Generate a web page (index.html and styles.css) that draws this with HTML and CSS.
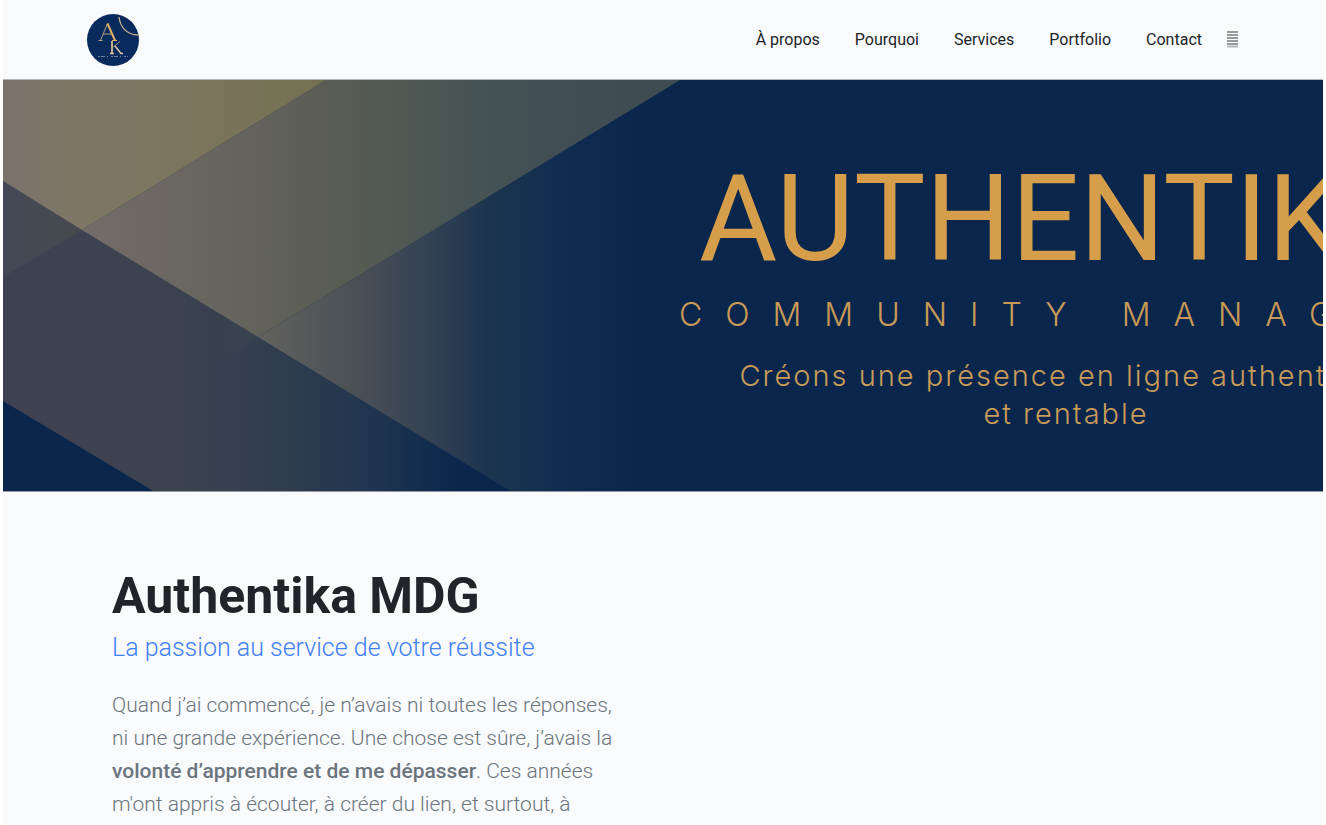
FILE: index.html
```html
<!DOCTYPE html>
<html lang="fr">
<head>
<meta charset="utf-8">
<title>Authentika MDG</title>
<link rel="stylesheet" href="styles.css">
</head>
<body>
<header class="site-header">
  <a class="brand" href="#" aria-label="Authentika">
    <svg width="52" height="52" viewBox="0 0 52 52" fill="none">
      <circle cx="26" cy="26" r="26" fill="#082a5c"/>
      <path d="M32 3c1 9 7 18 19 18" stroke="#c3ad89" stroke-width="1.3"/>
      <path d="M13.500 26.500 20.500 9.500M16.500 20h9M11.500 26.500h4" stroke="#b9a37c" stroke-width="1"/>
      <path d="M20.500 9.500 28 26.500" stroke="#dfb35f" stroke-width="2"/>
      <path d="M25 26.500h5" stroke="#dfb35f" stroke-width="1"/>
      <path d="M25 27v12M23 39.500h4" stroke="#dcc493" stroke-width="1.700"/>
      <path d="M33 27.500 25.500 33.500" stroke="#a99a80" stroke-width="1"/>
      <path d="M28 32 34 39.500h2" stroke="#d8c8aa" stroke-width="1.500"/>
      <path d="M11 42.500h30" stroke="#71809a" stroke-width="1" stroke-dasharray="2 1 4 2 1 3"/>
    </svg>
  </a>
  <nav class="menu">
    <a href="#apropos">À propos</a>
    <a href="#pourquoi">Pourquoi</a>
    <a href="#services">Services</a>
    <a href="#portfolio">Portfolio</a>
    <a href="#contact">Contact</a>
    <button class="menu-toggle" type="button" aria-label="Menu">
      <svg width="11" height="17" viewBox="0 0 11 17">
        <path d="M0 1h11M0 4h11M0 7h11M0 10h11M0 13h11" stroke="#777a7d" stroke-width="1.300"/>
        <path d="M0 15.500h11" stroke="#b4b6b8" stroke-width="2"/>
      </svg>
    </button>
  </nav>
</header>
<main>
  <section class="hero">
    <svg class="hero-art" width="680" height="412" viewBox="0 0 680 412" aria-hidden="true">
      <defs>
        <linearGradient id="gold" gradientUnits="userSpaceOnUse" x1="0" y1="0" x2="323" y2="0">
          <stop offset="0" stop-color="#7b716c"/><stop offset=".18" stop-color="#7e7667"/>
          <stop offset=".5" stop-color="#7d765f"/><stop offset="1" stop-color="#737052"/>
        </linearGradient>
        <linearGradient id="slate" gradientUnits="userSpaceOnUse" x1="79" y1="0" x2="677" y2="0">
          <stop offset="0" stop-color="#746c69"/><stop offset=".22" stop-color="#67655f"/>
          <stop offset=".42" stop-color="#5a5d54"/><stop offset=".6" stop-color="#4a5653"/>
          <stop offset=".75" stop-color="#424f54"/><stop offset="1" stop-color="#3e4b50"/>
        </linearGradient>
        <linearGradient id="fade" gradientUnits="userSpaceOnUse" x1="255" y1="0" x2="640" y2="0">
          <stop offset="0" stop-color="#62625e"/><stop offset=".24" stop-color="#4c5156"/>
          <stop offset=".44" stop-color="#344253"/><stop offset=".6" stop-color="#1c344f"/>
          <stop offset=".8" stop-color="#102c50"/><stop offset="1" stop-color="#0a264d"/>
        </linearGradient>
        <linearGradient id="band" gradientUnits="userSpaceOnUse" x1="0" y1="0" x2="460" y2="0">
          <stop offset="0" stop-color="#3e4151"/><stop offset=".3" stop-color="#3d4250"/>
          <stop offset=".5" stop-color="#37404f"/><stop offset=".64" stop-color="#2d3c4e"/>
          <stop offset=".8" stop-color="#20354f"/><stop offset="1" stop-color="#0a264d"/>
        </linearGradient>
        <linearGradient id="corner" gradientUnits="userSpaceOnUse" x1="0" y1="0" x2="79" y2="0">
          <stop offset="0" stop-color="#444856"/><stop offset="1" stop-color="#464a4e"/>
        </linearGradient>
        <linearGradient id="trace" gradientUnits="userSpaceOnUse" x1="215" y1="0" x2="262" y2="0">
          <stop offset="0" stop-color="#4a4f50" stop-opacity="0"/><stop offset="1" stop-color="#4a4f50" stop-opacity=".3"/>
        </linearGradient>
      </defs>
      <path d="M0 101 509 412H152L0 321z" fill="url(#band)"/>
      <path d="M215 232 255 257 215 281z" fill="url(#trace)"/>
      <path d="M0 101 79 150 0 197z" fill="url(#corner)"/>
      <path d="M255 257 677 0V412H509z" fill="url(#fade)"/>
      <path d="M79 150 323 0H677L255 257z" fill="url(#slate)"/>
      <path d="M0 0H323L79 150 0 101z" fill="url(#gold)"/>
    </svg>
    <div class="hero-copy">
      <p class="hero-name">AUTHENTIKA</p>
      <p class="hero-role">COMMUNITY MANAGER</p>
      <p class="hero-line">Créons une présence en ligne authentique<br>et rentable</p>
    </div>
  </section>
  <section class="about" id="apropos">
    <h1>Authentika MDG</h1>
    <p class="tagline">La passion au service de votre réussite</p>
    <p class="story">Quand j’ai commencé, je n’avais ni toutes les réponses, ni une grande expérience. Une chose est sûre, j’avais la <strong>volonté d’apprendre et de me dépasser</strong>. Ces années m'ont appris à écouter, à créer du lien, et surtout, à</p>
  </section>
</main>
</body>
</html>
```
FILE: styles.css
```css
* { box-sizing: border-box; }
html { background: #fff; }
body {
  min-height: 100vh;
  margin: 0 3px;
  background: #f8fafc;
  color: #212529;
  font-family: Roboto, "Liberation Sans", sans-serif;
  overflow-x: hidden;
}
p, h1 { margin: 0; }
.site-header {
  display: flex;
  align-items: center;
  justify-content: space-between;
  height: 80px;
  padding: 0 85px 0 84px;
  border-bottom: 1px solid #b4b6b4;
}
.brand svg { display: block; }
.menu { display: flex; align-items: center; gap: 35px; }
.menu a {
  color: #212529;
  font-size: 16px;
  line-height: 24px;
  text-decoration: none;
}
.menu-toggle {
  display: flex;
  margin-left: -10px;
  padding: 0;
  border: 0;
  background: none;
}
.hero {
  position: relative;
  overflow: hidden;
  height: 412px;
  background: #0a264d;
  border-bottom: 1px solid #9299a5;
}
.hero-art { position: absolute; left: 0; top: 0; }
.hero-copy {
  position: relative;
  width: 800px;
  margin-left: 657px;
  padding-top: 69px;
  color: #d69e4a;
  text-align: center;
  white-space: nowrap;
}
.hero-name { font-size: 120px; line-height: 140px; }
.hero-role {
  font-family: Inter, Roboto, sans-serif;
  font-size: 32px;
  font-weight: 300;
  line-height: 52px;
  letter-spacing: 23px;
  color: #c99a55;
}
.hero-line {
  padding: 16px 0 0 12px;
  font-family: Inter, Roboto, sans-serif;
  font-size: 29px;
  font-weight: 300;
  line-height: 38px;
  letter-spacing: 2px;
  color: #c99c58;
}
.about { max-width: 640px; padding: 72px 24px 0 109px; }
.about h1 { font-size: 50px; line-height: 64px; font-weight: 700; }
.tagline {
  padding-top: 2px;
  font-size: 25px;
  line-height: 36px;
  font-weight: 300;
  color: #3f80f6;
}
.story {
  padding-top: 23px;
  font-size: 21px;
  line-height: 33px;
  font-weight: 300;
  color: #6c757d;
}
.story strong { font-weight: 500; }
```
